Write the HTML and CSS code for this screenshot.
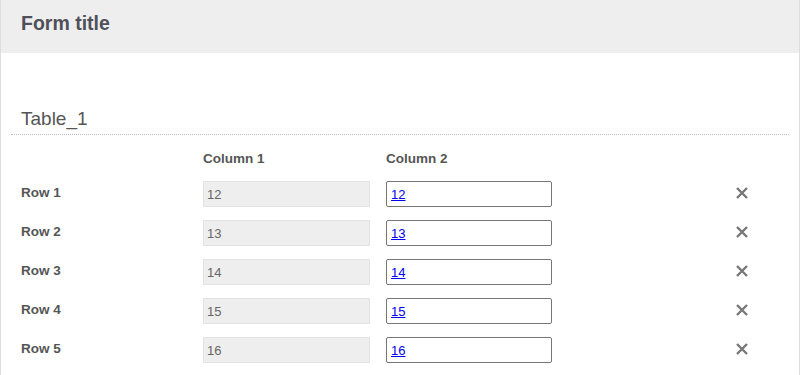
FILE: index.html
```html
<!DOCTYPE html>
<html lang="en">

<head>
    <meta charset="UTF-8">
    <meta name="viewport" content="width=device-width, initial-scale=1.0">
    <title>Form title</title>
    <link rel="stylesheet" href="styles.css">
</head>

<body>
    <div class="form">
        <header class="form-header">
            <h1>Form title</h1>
        </header>

        <section class="table-section">
            <h2 class="section-title">Table_1</h2>

            <div class="grid">
                <div class="cell"></div>
                <div class="cell col-head">Column 1</div>
                <div class="cell col-head">Column 2</div>
                <div class="cell"></div>

                <div class="cell row-label">Row 1</div>
                <div class="cell"><div class="field readonly">12</div></div>
                <div class="cell"><div class="field"><a href="#">12</a></div></div>
                <div class="cell remove"><svg viewBox="0 0 14 14" width="14" height="14"><path d="M2 2L12 12M12 2L2 12" /></svg></div>

                <div class="cell row-label">Row 2</div>
                <div class="cell"><div class="field readonly">13</div></div>
                <div class="cell"><div class="field"><a href="#">13</a></div></div>
                <div class="cell remove"><svg viewBox="0 0 14 14" width="14" height="14"><path d="M2 2L12 12M12 2L2 12" /></svg></div>

                <div class="cell row-label">Row 3</div>
                <div class="cell"><div class="field readonly">14</div></div>
                <div class="cell"><div class="field"><a href="#">14</a></div></div>
                <div class="cell remove"><svg viewBox="0 0 14 14" width="14" height="14"><path d="M2 2L12 12M12 2L2 12" /></svg></div>

                <div class="cell row-label">Row 4</div>
                <div class="cell"><div class="field readonly">15</div></div>
                <div class="cell"><div class="field"><a href="#">15</a></div></div>
                <div class="cell remove"><svg viewBox="0 0 14 14" width="14" height="14"><path d="M2 2L12 12M12 2L2 12" /></svg></div>

                <div class="cell row-label">Row 5</div>
                <div class="cell"><div class="field readonly">16</div></div>
                <div class="cell"><div class="field"><a href="#">16</a></div></div>
                <div class="cell remove"><svg viewBox="0 0 14 14" width="14" height="14"><path d="M2 2L12 12M12 2L2 12" /></svg></div>
            </div>
        </section>
    </div>
</body>

</html>
```

FILE: styles.css
```css
body {
    margin: 0;
    font-family: "Liberation Sans", Arial, sans-serif;
    color: #555;
    background-color: #fff;
}

.form {
    width: 798px;
    min-height: 100vh;
    border-left: 1px solid #ddd;
    border-right: 1px solid #ddd;
}

.form-header {
    background-color: #eee;
    height: 53px;
    padding: 0 20px;
    display: flex;
    align-items: flex-start;
}

.form-header h1 {
    margin: 0;
    padding-top: 12px;
    font-size: 19.5px;
    font-weight: bold;
    color: #50505a;
}

.table-section {
    padding: 55px 10px 0;
}

.section-title {
    margin: 0;
    padding: 0 10px 4px;
    font-size: 19px;
    font-weight: normal;
    color: #555;
    line-height: 22px;
    border-bottom: 1px dotted #bbb;
}

.grid {
    display: grid;
    grid-template-columns: 166px 167px 166px 1fr 14px;
    grid-template-rows: 22px;
    grid-auto-rows: 26px;
    column-gap: 16px;
    row-gap: 13px;
    padding: 11px 40px 0 10px;
}

.grid > .cell:nth-child(4n) {
    grid-column: 5;
}

.cell {
    display: flex;
    align-items: center;
}

.col-head,
.row-label {
    font-size: 13.5px;
    font-weight: bold;
    color: #555;
}

.col-head {
    padding-top: 3px;
}

.row-label {
    padding-bottom: 3px;
}

.field {
    box-sizing: border-box;
    width: 100%;
    height: 26px;
    padding: 0 4px;
    display: flex;
    align-items: center;
    font-size: 13px;
    border: 1px solid #767676;
    border-radius: 2px;
    background-color: #fff;
}

.field.readonly {
    padding-left: 3px;
    background-color: #eee;
    border-color: #e3e3e3;
    border-radius: 0;
    color: #666;
}

.field a {
    color: #0000ee;
    text-decoration: underline;
}

.remove {
    justify-content: center;
    padding-bottom: 3px;
}

.remove svg {
    stroke: #777;
    stroke-width: 2.4;
    fill: none;
}
```
